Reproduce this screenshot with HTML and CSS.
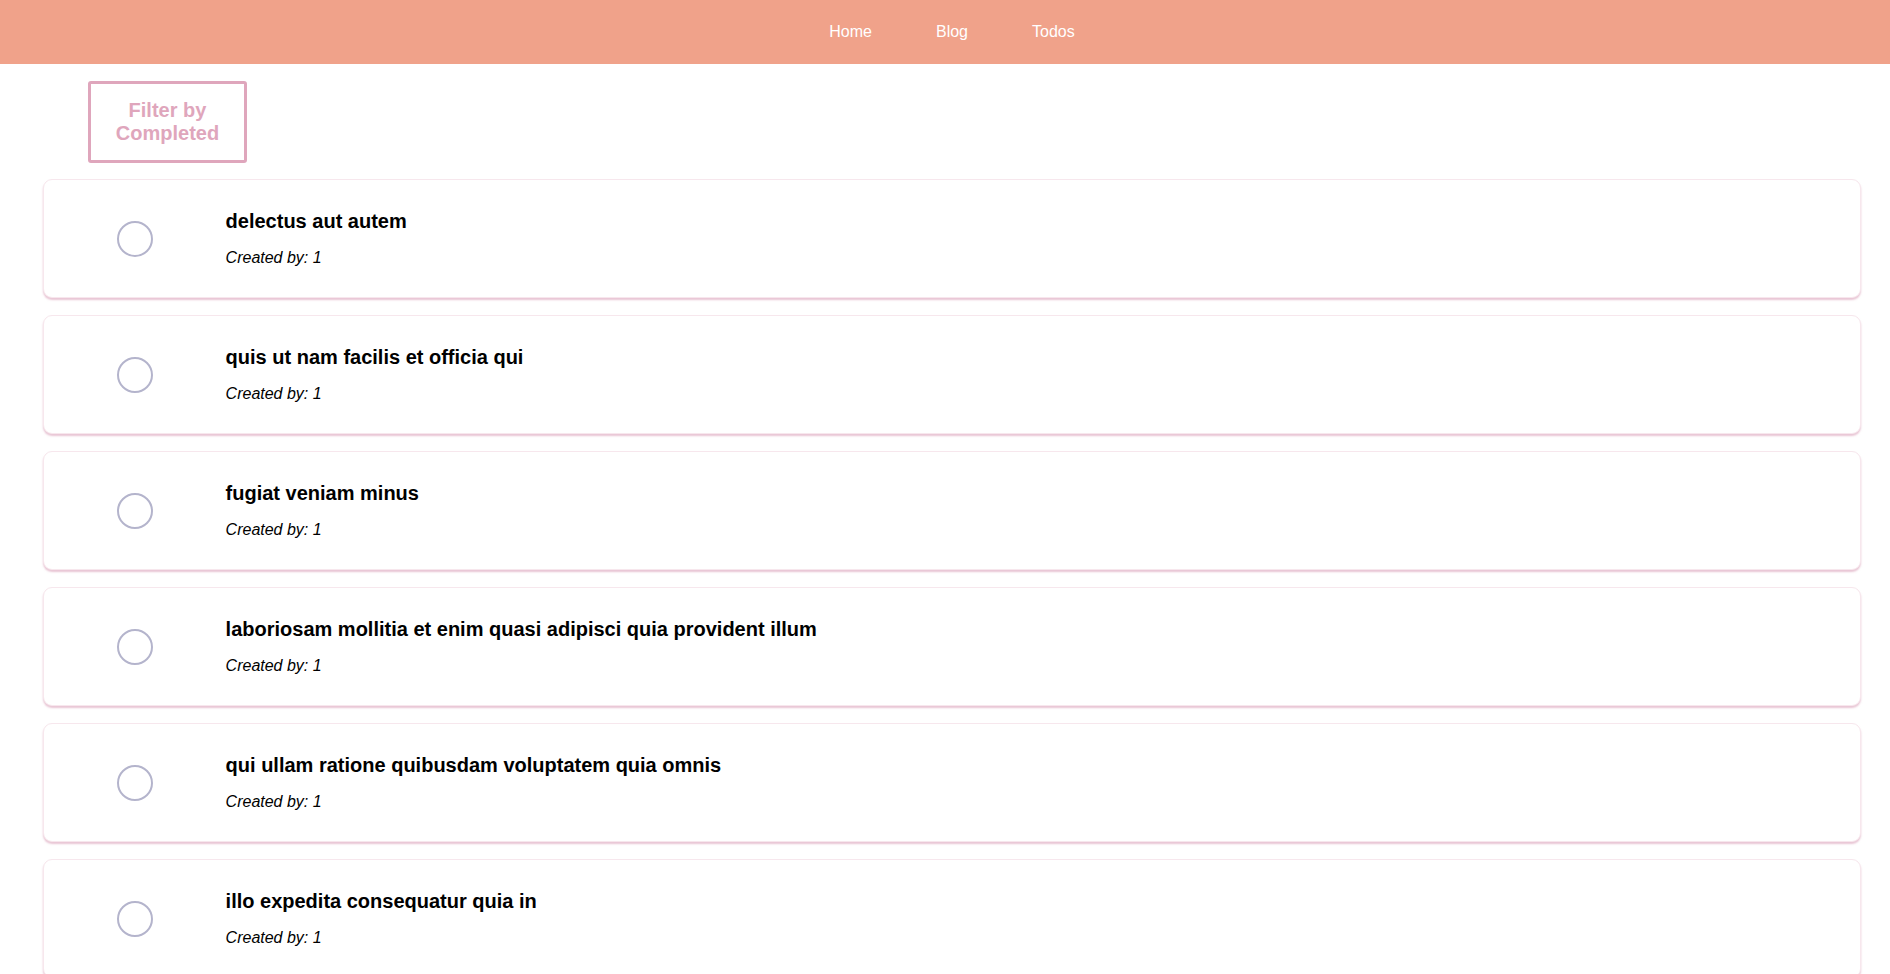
FILE: index.html
```html
<!DOCTYPE html>
<html>
<head>
<meta charset="utf-8">
<title>Todos</title>
<link rel="stylesheet" href="styles.css">
</head>
<body>
<nav class="topnav">
  <a class="navlink" href="#">Home</a>
  <a class="navlink" href="#">Blog</a>
  <a class="navlink" href="#">Todos</a>
</nav>
<div class="filter-bar">
  <button class="filter-btn">Filter by Completed</button>
</div>
<ul class="todo-list">
  <li class="todo">
    <div class="check-col"><span class="check"></span></div>
    <div class="todo-body">
      <h3 class="todo-title">delectus aut autem</h3>
      <p class="todo-meta">Created by: 1</p>
    </div>
  </li>
  <li class="todo">
    <div class="check-col"><span class="check"></span></div>
    <div class="todo-body">
      <h3 class="todo-title">quis ut nam facilis et officia qui</h3>
      <p class="todo-meta">Created by: 1</p>
    </div>
  </li>
  <li class="todo">
    <div class="check-col"><span class="check"></span></div>
    <div class="todo-body">
      <h3 class="todo-title">fugiat veniam minus</h3>
      <p class="todo-meta">Created by: 1</p>
    </div>
  </li>
  <li class="todo">
    <div class="check-col"><span class="check"></span></div>
    <div class="todo-body">
      <h3 class="todo-title">laboriosam mollitia et enim quasi adipisci quia provident illum</h3>
      <p class="todo-meta">Created by: 1</p>
    </div>
  </li>
  <li class="todo">
    <div class="check-col"><span class="check"></span></div>
    <div class="todo-body">
      <h3 class="todo-title">qui ullam ratione quibusdam voluptatem quia omnis</h3>
      <p class="todo-meta">Created by: 1</p>
    </div>
  </li>
  <li class="todo">
    <div class="check-col"><span class="check"></span></div>
    <div class="todo-body">
      <h3 class="todo-title">illo expedita consequatur quia in</h3>
      <p class="todo-meta">Created by: 1</p>
    </div>
  </li>
</ul>
</body>
</html>
```

FILE: styles.css
```css
html, body {
  margin: 0;
  padding: 0;
  background: #ffffff;
  font-family: "Liberation Sans", Arial, sans-serif;
}

body::-webkit-scrollbar {
  display: none;
}

html {
  scrollbar-width: none;
}

.topnav {
  height: 64px;
  background: #f0a28a;
  display: flex;
  justify-content: center;
  align-items: center;
  gap: 64px;
  padding-left: 14px;
}

.navlink {
  color: #ffffff;
  text-decoration: none;
  font-size: 16px;
}

.filter-bar {
  padding: 17px 0 0 88px;
}

.filter-btn {
  width: 159px;
  height: 82px;
  box-sizing: border-box;
  background: #ffffff;
  border: 3px solid #dfa6bc;
  border-radius: 3px;
  color: #dfa6bc;
  font-family: "Liberation Sans", Arial, sans-serif;
  font-weight: bold;
  font-size: 20px;
  line-height: 23px;
  padding: 0 20px;
  cursor: pointer;
}

.todo-list {
  list-style: none;
  margin: 16px 29px 0 43px;
  padding: 0;
  display: flex;
  flex-direction: column;
  gap: 17px;
}

.todo {
  display: grid;
  grid-template-columns: 10% 1fr;
  align-items: center;
  border: 1px solid #f7e7ed;
  border-radius: 9px;
  box-shadow: 0 2px 2px rgba(214, 150, 176, 0.55);
  background: #ffffff;
}

.check-col {
  display: flex;
  justify-content: center;
  align-items: center;
}

.check {
  width: 36px;
  height: 36px;
  box-sizing: border-box;
  border: 2px solid #b4b4cc;
  border-radius: 50%;
}

.todo-body {
  padding: 30px 0;
}

.todo-title {
  margin: 0 0 16px 0;
  font-size: 20px;
  line-height: 23px;
  font-weight: bold;
  color: #000000;
}

.todo-meta {
  margin: 0;
  font-size: 16px;
  line-height: 18px;
  font-style: italic;
  color: #000000;
}
```
